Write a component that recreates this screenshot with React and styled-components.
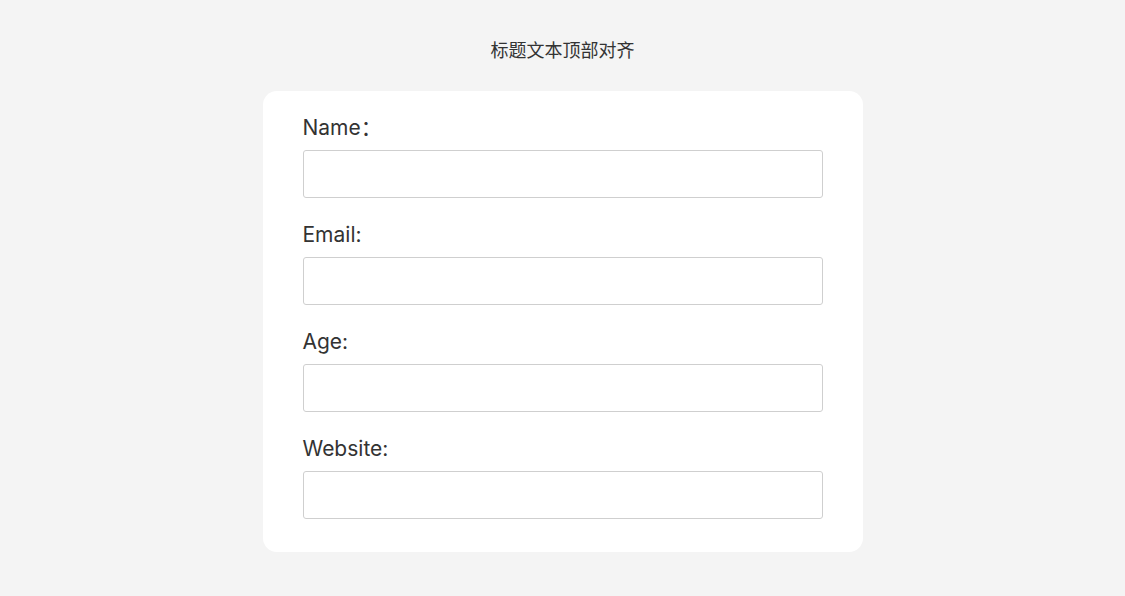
import React from "react";
import styled, { createGlobalStyle } from "styled-components";

const Global = createGlobalStyle`
  html, body { margin: 0; padding: 0; background: #f4f4f4; }
  body { font-family: Inter, "Noto Sans CJK SC", sans-serif; }
`;

const Page = styled.div`
  display: flex;
  flex-direction: column;
  align-items: center;
  padding-top: 37px;
`;

const Title = styled.h1`
  margin: 0;
  font-family: "Noto Sans CJK SC", sans-serif;
  font-size: 18px;
  font-weight: 400;
  line-height: 24px;
  color: #333;
`;

const Card = styled.form`
  box-sizing: border-box;
  width: 600px;
  margin-top: 30px;
  background: #fff;
  border-radius: 14px;
  padding: 23px 39px 33px 40px;
  display: flex;
  flex-direction: column;
  gap: 23px;
`;

const Field = styled.div`
  display: flex;
  flex-direction: column;
  gap: 8px;
`;

const Label = styled.label`
  font-family: Inter, "Noto Sans CJK SC", sans-serif;
  font-size: 21px;
  line-height: 28px;
  color: #333;
`;

const Input = styled.input`
  box-sizing: border-box;
  width: 520px;
  height: 48px;
  border: 1px solid #cfcfcf;
  border-radius: 3px;
  background: #fff;
  font-size: 16px;
  padding: 0 10px;
  outline: none;
`;

const fields = ["Name：", "Email:", "Age:", "Website:"];

export default function App() {
  return (
    <>
      <Global />
      <Page>
        <Title>标题文本顶部对齐</Title>
        <Card onSubmit={(e) => e.preventDefault()}>
          {fields.map((f) => (
            <Field key={f}>
              <Label>{f}</Label>
              <Input type="text" />
            </Field>
          ))}
        </Card>
      </Page>
    </>
  );
}
